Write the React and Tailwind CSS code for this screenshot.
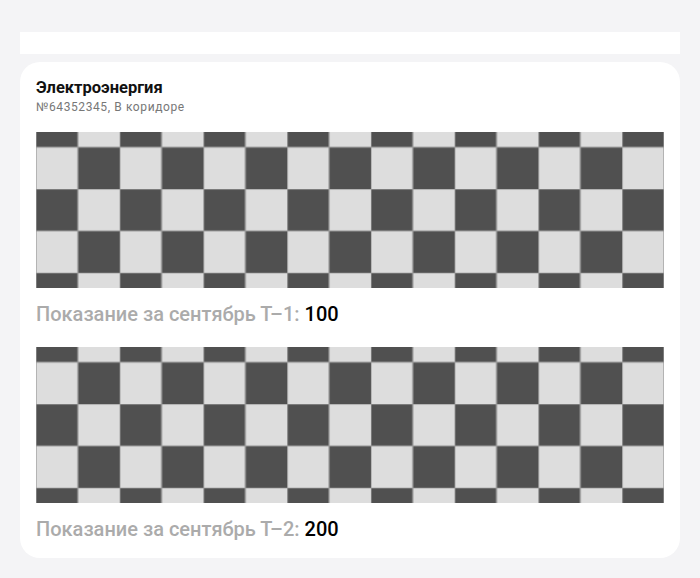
import React from "react";

function Checker({ id }) {
  const s = 628 / 15;
  return (
    <svg className="block w-full h-[156px]" viewBox="0 0 628 156" preserveAspectRatio="none">
      <defs>
        <pattern id={id} width={s * 2} height={s * 2} patternUnits="userSpaceOnUse" y={(156 - s * 3) / 2 - s}>
          <rect width={s * 2} height={s * 2} fill="#dddddd" />
          <rect width={s} height={s} fill="#505050" />
          <rect x={s} y={s} width={s} height={s} fill="#505050" />
          <path d={`M0 0H${s * 2}M0 ${s}H${s * 2}M0 0V${s * 2}M${s} 0V${s * 2}`} stroke="#999999" strokeWidth="1.2" fill="none" />
        </pattern>
      </defs>
      <rect width="628" height="156" fill={`url(#${id})`} />
    </svg>
  );
}

const readings = [
  { id: "t1", label: "Показание за сентябрь Т–1:", value: "100" },
  { id: "t2", label: "Показание за сентябрь Т–2:", value: "200" },
];

export default function App() {
  return (
    <div className="min-h-[578px] bg-[#f4f4f6] px-5 pt-8 pb-5 font-['Roboto',sans-serif]">
      <div className="h-[22px] bg-white" />
      <div className="mt-2 rounded-[20px] bg-white px-4 pt-4 pb-[17px]">
        <h3 className="text-[16.5px] leading-5 font-bold text-[#111]">Электроэнергия</h3>
        <p className="mt-px text-xs leading-4 tracking-[0.05em] text-[#777]">№64352345, В коридоре</p>
        <div className="mt-[17px] flex flex-col gap-[21px]">
          {readings.map(r => (
            <div key={r.id} className="flex flex-col gap-[14px]">
              <Checker id={r.id} />
              <p className="text-[20px] leading-6 font-medium text-[#ababab]">
                {r.label} <span className="text-black">{r.value}</span>
              </p>
            </div>
          ))}
        </div>
      </div>
    </div>
  );
}
